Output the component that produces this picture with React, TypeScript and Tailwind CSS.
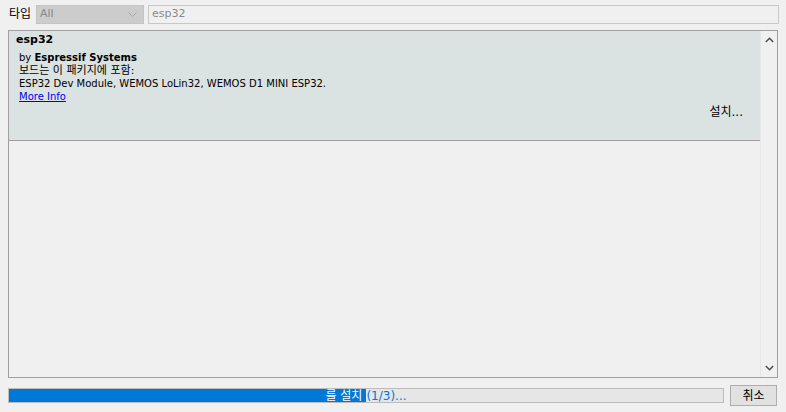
const ui = "font-['Tahoma','DejaVu_Sans','Noto_Sans_CJK_KR',sans-serif]";

function ProgressBar() {
    return (
        <div className="relative h-[15px] w-[716px] border border-[#bcbcbc] bg-[#e6e6e6]">
            <div className="absolute left-0 top-0 h-full w-[357px] bg-[#0078d7]"></div>
            <div className="absolute inset-0 flex items-center justify-center text-[12px] leading-none">
                <span className="text-white">를 설치</span>
                <span className="ml-[4px] text-[#0078d7]">(1/3)...</span>
            </div>
        </div>
    );
}

export default function App() {
    return (
        <div className={`flex h-[412px] w-[786px] flex-col bg-[#f0f0f0] pl-[8px] pr-[7px] text-[#000] ${ui}`}>

            <div className="flex h-[30px] items-start pt-[5px]">
                <span className="ml-[1px] w-[27px] pt-[1px] text-[12px] leading-[17px]">타입</span>
                <div className="flex h-[19px] w-[108px] items-center justify-between border border-[#c4c4c4] bg-[#cccccc] pl-[3px] pr-[6px] text-[11px] text-[#8a8a8a]">
                    <span>All</span>
                    <svg width="9" height="6" viewBox="0 0 9 6" fill="none" stroke="#a8a8a8" strokeWidth="1">
                        <path d="M0.5 0.5 L4.5 4.5 L8.5 0.5" />
                    </svg>
                </div>
                <div className="ml-[4px] flex h-[19px] flex-1 items-center border border-[#c8c8c8] bg-[#f0f0f0] pl-[3px] text-[11px] text-[#8a8a8a]">
                    esp32
                </div>
            </div>

            <div className="mr-[1px] flex h-[348px] border border-[#a0a0a0] bg-[#f0f0f0]">
                <div className="flex-1">
                    <div className="h-[110px] border-b border-[#a0a0a0] bg-[#dae2e2]">
                        <div className="pl-[7px] pt-[1px] text-[11px] font-bold leading-[15px]">esp32</div>
                        <div className="pl-[10px] pt-[4px] text-[10px] leading-[13px]">
                            <div>by <span className="font-bold">Espressif Systems</span></div>
                            <div className="text-[11px]">보드는 이 패키지에 포함:</div>
                            <div>ESP32 Dev Module, WEMOS LoLin32, WEMOS D1 MINI ESP32.</div>
                            <div className="text-[#0000ee] underline">More Info</div>
                        </div>
                        <div className="flex justify-end pr-[17px] pt-[2px] text-[12px] leading-[15px]">설치...</div>
                    </div>
                </div>
                <div className="flex w-[17px] flex-col items-center justify-between border-l border-[#e6e6e6] bg-[#f0f0f0] py-[6px]">
                    <svg width="9" height="6" viewBox="0 0 9 6" fill="none" stroke="#505050" strokeWidth="1.6">
                        <path d="M0.8 5 L4.5 1.3 L8.2 5" />
                    </svg>
                    <svg width="9" height="6" viewBox="0 0 9 6" fill="none" stroke="#505050" strokeWidth="1.6">
                        <path d="M0.8 1 L4.5 4.7 L8.2 1" />
                    </svg>
                </div>
            </div>

            <div className="mt-[7px] flex items-center">
                <ProgressBar />
                <button className="ml-[6px] flex h-[21px] w-[47px] items-center justify-center border border-[#adadad] bg-[#e1e1e1] text-[12px] leading-none">
                    취소
                </button>
            </div>

        </div>
    );
}
